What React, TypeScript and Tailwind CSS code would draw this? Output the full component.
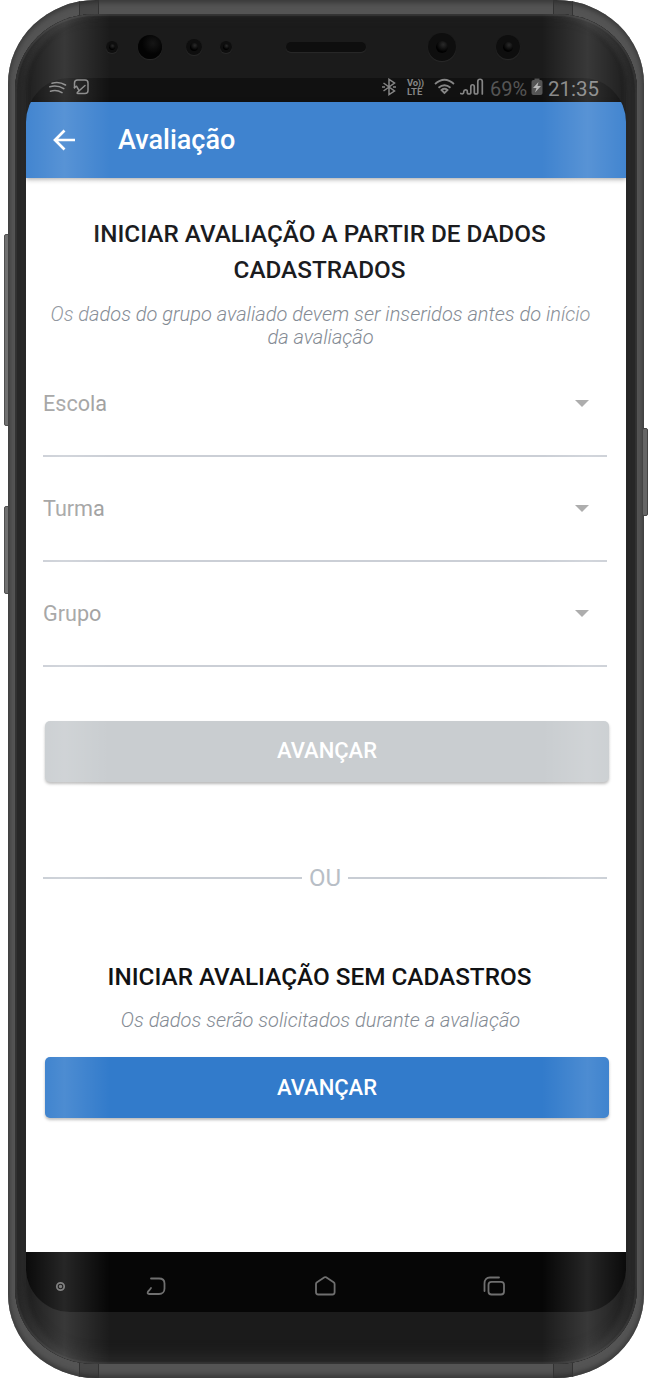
import React from "react";

function Lens({ className, glow }: { className: string; glow: string }) {
  return (
    <span
      className={`absolute flex items-center justify-center rounded-full bg-[#0e0e0e] shadow-[0_1px_1px_#2a2a2a] ${className}`}
    >
      <span className={`rounded-full ${glow}`} />
    </span>
  );
}

function Select({ label }: { label: string }) {
  return (
    <div className="flex h-[105px] items-center justify-between border-b-2 border-[#cbcfd6] pr-[18px] text-[21.6px] text-[#a0a0a0]">
      <span className="pt-px">{label}</span>
      <svg width="14" height="7" viewBox="0 0 14 7" fill="#a3a3a3">
        <path d="M0 0h14L7 7z" />
      </svg>
    </div>
  );
}

function Button({ className }: { className: string }) {
  return (
    <button
      className={`ml-[2px] flex h-[61px] w-[564px] items-center justify-center rounded-[5px] text-[22px] font-medium text-white shadow-[0_2px_3px_rgba(0,0,0,0.28)] ${className}`}
    >
      AVANÇAR
    </button>
  );
}

function StatusBar() {
  return (
    <div className="flex h-6 shrink-0 items-start justify-between bg-[#111] pl-[23px] pr-[27px] text-[#858585]">
      <svg width="44" height="18" viewBox="0 0 44 18" fill="none" stroke="currentColor" strokeWidth="1.500" strokeLinecap="round">
        <path d="M3 5.200Q10 3 16.500 7M0.800 8.800q7.500-2 14 1.900M1.500 13.300q6-2 11.500 1.400" />
        <path d="M25.500 10V5q0-3 3-3h7.500q3 0 3 3v7.500q0 3-3 3H29q-1.500 0-.5-1.300L36 7.500" />
        <path d="M25.500 9.500l2-1.300 2.500 4.300" strokeLinejoin="round" />
      </svg>
      <div className="flex items-start whitespace-nowrap">
        <svg className="mr-[9px]" width="16" height="19" viewBox="0 0 16 19" fill="none" stroke="currentColor" strokeWidth="1.500">
          <path d="M1.500 5l11 8L7 16.700V1.300L12.500 5l-11 8" />
          <path d="M0 9h3M11 9h3" strokeWidth="1.6" />
        </svg>
        <span className="mr-[9px] w-[18px] text-[9.500px] leading-[9px] font-bold">
          <span className="block tracking-[-0.3px]">Vo))</span>
          <span className="block">LTE</span>
        </span>
        <svg className="mr-[4px]" width="22" height="18" viewBox="0 0 22 18" fill="none" stroke="currentColor" strokeWidth="1.800">
          <path d="M1 6Q10.500-2.500 20 6M4.500 9.800q6-5 12 0" />
          <path d="M10.500 15l-3-3q3-2.500 6 0z" />
        </svg>
        <svg className="mr-[5px]" width="25" height="19" viewBox="0 0 25 19" fill="none" stroke="currentColor" strokeWidth="1.700" strokeLinecap="round">
          <path d="M0.800 15.500c2 1 3 0 3-2s3.500-2.500 3.500 0v1c0 2 3.500 2 3.500 0V9c0-3 3.500-3 3.500 0v5.500c0 2 3.500 2 3.500 0V3.500c0-3 4.500-3 4.500 0V16" />
        </svg>
        <span className="w-[38px] text-[20px] leading-[23px] text-[#555]">69%</span>
        <svg className="ml-[3px] mr-[5px]" width="12" height="18" viewBox="0 0 12 18">
          <rect x="3.500" y="0.500" width="5" height="2" fill="#555" />
          <rect x="0.500" y="2" width="11" height="15" rx="2" fill="#555" />
          <path d="M7.500 4L2 10h3.500L4 14.500 10 8H6.500z" fill="#b8b8b8" />
        </svg>
        <span className="w-[51px] text-[20.500px] leading-[23px]">21:35</span>
      </div>
    </div>
  );
}

function NavBar() {
  return (
    <div className="flex h-[60px] shrink-0 items-center bg-[#060606] pt-[14px] text-[#6f6f6f]">
      <svg width="600" height="30" viewBox="0 0 600 30" fill="none" stroke="currentColor" strokeWidth="1.800" strokeLinecap="round" strokeLinejoin="round">
        <circle cx="34.500" cy="12.500" r="3.700" />
        <circle cx="34.500" cy="12.500" r="0.800" fill="currentColor" />
        <path d="M125 4.500h8c3.500 0 5.500 2 5.500 5v5c0 3-2 5.500-5.500 5.500h-9.500c-2.500 0-2.500-2 0-4l1.500-2" />
        <path d="M290 10q0-1 1-1.700l7.500-5q.8-.5 1.600 0l7.500 5q1 .7 1 1.700v8.300q0 2.200-2.200 2.200h-14.200q-2.200 0-2.200-2.200z" />
        <rect x="462.500" y="7.800" width="15.500" height="12.700" rx="3" />
        <path d="M458.500 17V9.500c0-4 2-6 5.500-6h9" />
      </svg>
    </div>
  );
}

export default function App() {
  return (
    <div className="relative h-[1378px] w-[652px] overflow-hidden bg-white font-['Roboto',sans-serif]">
      <span className="absolute left-[4px] top-[234px] h-[192px] w-[6px] rounded-[2px] border border-[#505050] bg-[#707070]" />
      <span className="absolute left-[4px] top-[506px] h-[88px] w-[6px] rounded-[2px] border border-[#505050] bg-[#707070]" />

      <div className="relative mx-[8px] h-[1378px] overflow-hidden rounded-[88px/84px] bg-[#545454] px-[7px] py-[14px] shadow-[inset_0_3px_5px_#3a3a3a,inset_0_-3px_5px_#3a3a3a]">
        <span className="absolute left-[71px] top-0 h-[1378px] w-[20px] border-x border-[#333] bg-black/15" />
        <span className="absolute right-[71px] top-0 h-[1378px] w-[20px] border-x border-[#333] bg-black/15" />

        <div className="relative flex h-[1350px] flex-col overflow-hidden rounded-[80px/76px] bg-[#1b1b1b] px-[11px] shadow-[inset_0_2px_1px_#343434,inset_0_-2px_1px_#343434,inset_2px_0_1px_#343434,inset_-2px_0_1px_#343434,inset_0_-8px_14px_#292929,inset_0_4px_8px_#232323,inset_11px_0_4px_#292929,inset_-11px_0_4px_#292929]">
          <div className="h-[64px] shrink-0">
            <Lens className="left-[91px] top-[27px] h-[12px] w-[12px]" glow="h-[6px] w-[6px] bg-[radial-gradient(circle_at_60%_30%,#2a2a2a,#000_65%)]" />
            <Lens className="left-[123px] top-[21px] h-[24px] w-[24px]" glow="h-[24px] w-[24px] bg-[radial-gradient(circle_at_62%_35%,#161616,#030303_50%)]" />
            <Lens className="left-[171px] top-[25px] h-[16px] w-[16px]" glow="h-[8px] w-[8px] bg-[radial-gradient(circle_at_60%_30%,#2a2a2a,#000_65%)]" />
            <Lens className="left-[205px] top-[27px] h-[12px] w-[12px]" glow="h-[6px] w-[6px] bg-[radial-gradient(circle_at_60%_30%,#2a2a2a,#000_65%)]" />
            <span className="absolute left-[271px] top-[28px] h-[10px] w-[80px] rounded-full bg-[#0e0e0e] shadow-[0_1px_1px_#2a2a2a]" />
            <Lens className="left-[413px] top-[19px] h-[28px] w-[28px]" glow="h-[12px] w-[12px] bg-[radial-gradient(circle_at_60%_30%,#2a2a2a,#000_65%)]" />
            <Lens className="left-[481px] top-[21px] h-[24px] w-[24px]" glow="h-[10px] w-[10px] bg-[radial-gradient(circle_at_60%_30%,#2a2a2a,#000_65%)]" />
          </div>

          <div className="flex h-[1234px] shrink-0 flex-col overflow-hidden rounded-[44px]">
            <StatusBar />
            <header className="relative flex h-[76px] shrink-0 items-center bg-[#3f83cf] pl-[27px] text-[27px] font-medium text-white shadow-[0_1px_5px_rgba(0,0,0,0.4)]">
              <svg className="mr-[43px]" width="22" height="22" viewBox="0 0 22 22" fill="none" stroke="currentColor" strokeWidth="2.700">
                <path d="M22 11H2M11.500 1.500L2 11l9.500 9.500" />
              </svg>
              <span className="pt-px">Avaliação</span>
            </header>

            <main className="flex grow flex-col whitespace-nowrap bg-white px-[17px] pt-[38px]">
              <h2 className="mr-[13px] text-center text-[24.300px] leading-[36px] font-medium text-[#1b1c1f]">
                INICIAR AVALIAÇÃO A PARTIR DE DADOS
                <br />
                CADASTRADOS
              </h2>
              <p className="mr-[11px] mt-[15px] h-[49px] text-center text-[20px] leading-[23px] font-light italic text-[#848b94]">
                Os dados do grupo avaliado devem ser inseridos antes do início
                <br />
                da avaliação
              </p>
              <div className="mr-[2px]">
                <Select label="Escola" />
                <Select label="Turma" />
                <Select label="Grupo" />
              </div>
              <Button className="mt-[54px] bg-[#c9cdd0] pb-[3px]" />
              <div className="mr-[2px] mt-[81px] flex h-[30px] items-center gap-[7px] text-[24px] text-[#b8bec6]">
                <span className="h-[2px] grow bg-[#c8cdd4]" />
                <span>OU</span>
                <span className="h-[2px] grow bg-[#c8cdd4]" />
              </div>
              <h2 className="mr-[13px] mt-[66px] text-center text-[24.300px] leading-[36px] font-medium text-[#111214]">
                INICIAR AVALIAÇÃO SEM CADASTROS
              </h2>
              <p className="mr-[11px] mt-[14px] text-center text-[20px] leading-[23px] font-light italic text-[#848b94]">
                Os dados serão solicitados durante a avaliação
              </p>
              <Button className="mt-[25px] bg-[#327bcb] pb-px" />
            </main>
            <NavBar />
          </div>

          <span className="pointer-events-none absolute inset-y-0 left-0 w-[95px] bg-linear-to-r from-transparent from-[5%] via-white/13 via-[52%] to-transparent" />
          <span className="pointer-events-none absolute inset-y-0 right-0 w-[95px] bg-linear-to-l from-transparent from-[5%] via-white/13 via-[52%] to-transparent" />
        </div>
      </div>

      <span className="absolute left-[642px] top-[428px] h-[88px] w-[6px] rounded-[2px] border border-[#444] bg-[#656565]" />
    </div>
  );
}
